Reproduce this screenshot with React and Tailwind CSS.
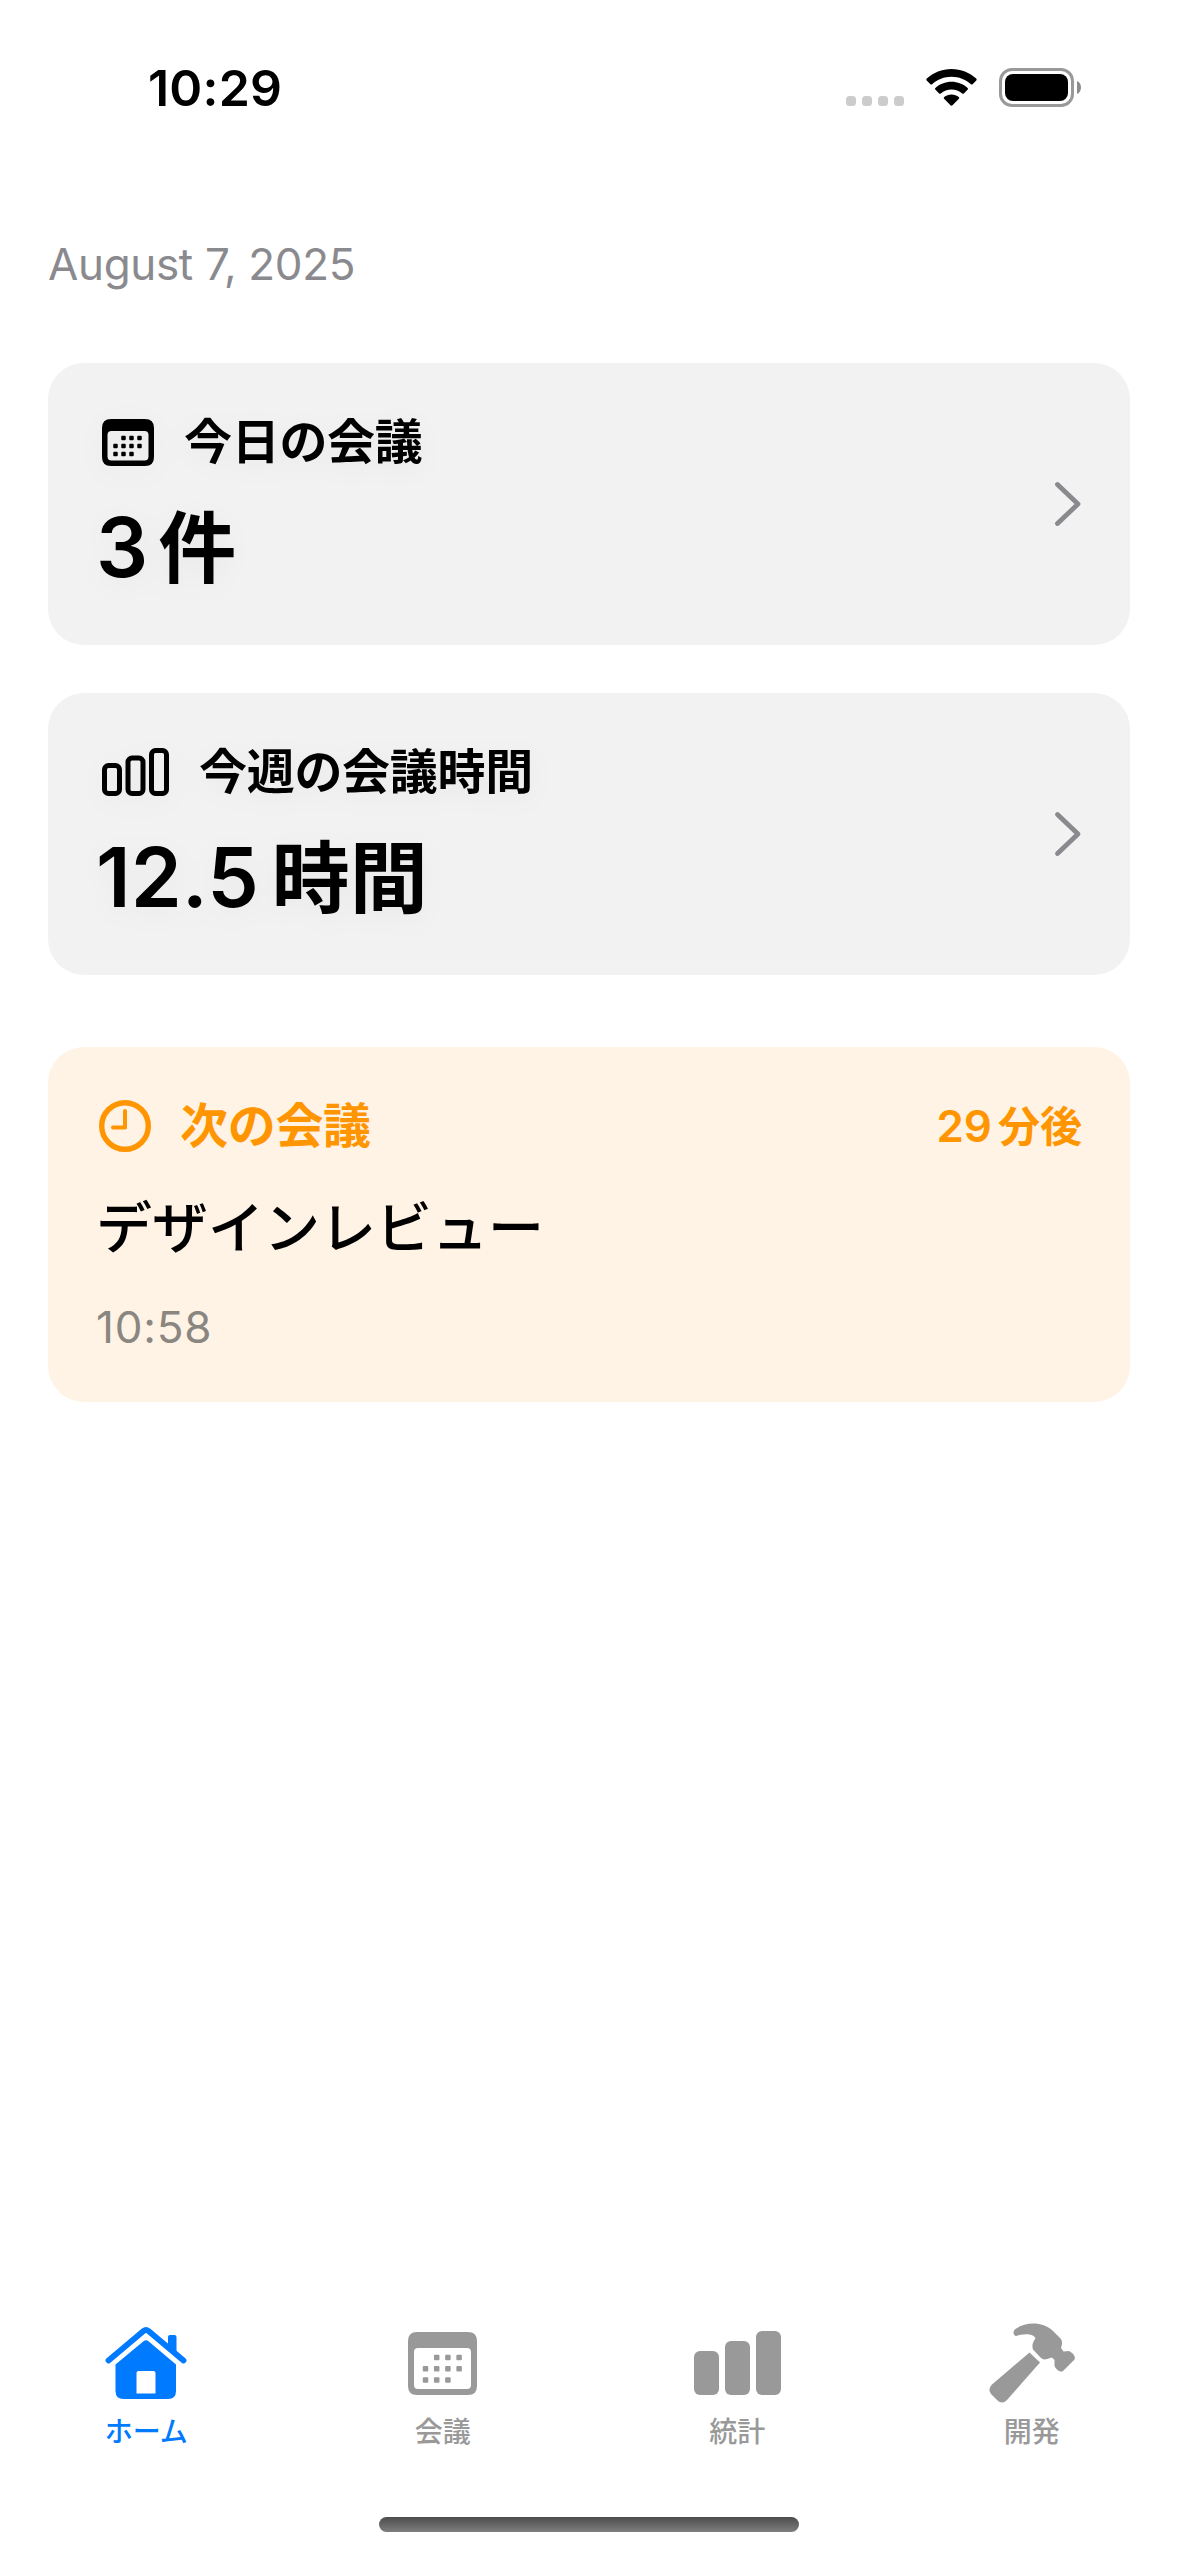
const JP = "font-['Inter','Noto_Sans_CJK_JP',sans-serif]";

function CalendarGlyph({ className, bar, rim, dots, dot, size }) {
  const [w, h] = size;
  return (
    <svg className={className} viewBox={`0 0 ${w} ${h}`} fill="currentColor">
      <path
        fillRule="evenodd"
        d={`M9 0H${w - 9}Q${w} 0 ${w} 9V${h - 9}Q${w} ${h} ${w - 9} ${h}H9Q0 ${h} 0 ${h - 9}V9Q0 0 9 0Z M${rim + 4} ${bar}Q${rim} ${bar} ${rim} ${bar + 4}V${h - rim - 4}Q${rim} ${h - rim} ${rim + 4} ${h - rim}H${w - rim - 4}Q${w - rim} ${h - rim} ${w - rim} ${h - rim - 4}V${bar + 4}Q${w - rim} ${bar} ${w - rim - 4} ${bar}Z`}
      />
      {dots.map(([x, y]) => (
        <rect key={`${x}-${y}`} x={x - dot / 2} y={y - dot / 2} width={dot} height={dot} rx="1" />
      ))}
    </svg>
  );
}

function dotGrid(x, y, step) {
  return [
    [1, 0], [2, 0], [3, 0],
    [0, 1], [1, 1], [2, 1], [3, 1],
    [0, 2], [1, 2], [2, 2],
  ].map(([c, r]) => [x + c * step, y + r * step]);
}

function StatusBar() {
  return (
    <div className="flex h-[176px] justify-between pl-[148px] pr-[96px]">
      <div className="pt-[58px] text-[50px] leading-[60px] font-semibold tracking-[0.2px]">10:29</div>
      <div className="flex items-start pt-[68px]">
        <div className="mt-[28px] flex gap-[6px]">
          {[0, 1, 2, 3].map((i) => (
            <div key={i} className="size-[10px] rounded-[3.5px] bg-[#cccccc]" />
          ))}
        </div>
        <svg className="ml-[22px] h-[38px] w-[51px]" viewBox="0 0 51 38" fill="currentColor">
          <path d="M25.5 1C35 1 43.700 4.500 50.200 10.600C50.800 11.200 50.800 11.900 50.300 12.400L46.600 16.200C46.100 16.700 45.400 16.700 44.900 16.200C39.500 11.400 32.800 8.700 25.500 8.700S11.500 11.400 6.100 16.200C5.600 16.700 4.900 16.700 4.400 16.200L.7 12.400C.2 11.900.2 11.200.8 10.600C7.300 4.500 16 1 25.500 1Z" />
          <path d="M25.500 13.700C31.700 13.700 37.300 16 41.600 19.900C42.200 20.400 42.200 21.100 41.700 21.600L37.900 25.400C37.400 25.900 36.800 25.900 36.200 25.400C33.300 22.900 29.500 21.400 25.500 21.400S17.700 22.900 14.800 25.400C14.200 25.900 13.600 25.900 13.100 25.400L9.300 21.600C8.800 21.100 8.800 20.400 9.400 19.900C13.700 16 19.300 13.700 25.500 13.700Z" />
          <path d="M25.500 26.400C28.300 26.400 30.800 27.400 32.800 29.100C33.400 29.600 33.400 30.300 32.900 30.800L26.500 37.300C25.900 37.900 25.100 37.900 24.500 37.300L18.100 30.800C17.600 30.300 17.600 29.600 18.200 29.100C20.200 27.400 22.700 26.400 25.500 26.400Z" />
        </svg>
        <svg className="ml-[22px] h-[39px] w-[83px]" viewBox="0 0 83 39">
          <rect x="1.500" y="1.500" width="72" height="36" rx="11.500" fill="none" stroke="#999999" strokeWidth="3" />
          <rect x="6" y="6" width="63" height="27" rx="8" fill="#000" />
          <path d="M78 13V26C80.600 24.900 82 22.400 82 19.500S80.600 14.100 78 13Z" fill="#8c8c8c" />
        </svg>
      </div>
    </div>
  );
}

function Chevron() {
  return (
    <svg className="h-[46px] w-[28px]" viewBox="0 0 28 46" fill="none" stroke="#8a8a8e" strokeWidth="4.800" strokeLinecap="round" strokeLinejoin="round">
      <path d="M3.500 3.500L24 23L3.500 42.500" />
    </svg>
  );
}

function SummaryCard({ icon, title, value, unit, unitGap }) {
  return (
    <section className="flex h-[282px] items-center justify-between rounded-[36px] bg-[#f2f2f2] px-[48px]">
      <div className="flex h-full flex-col drop-shadow-[0_6px_12px_rgba(0,0,0,0.04)]">
        <div className="mt-[49px] flex h-[60px] items-center">
          {icon}
          <h2 className="ml-[30px] text-[48px] leading-[60px] font-bold tracking-[-0.3px]">{title}</h2>
        </div>
        <div className="mt-[26px] flex h-[100px] items-baseline leading-[100px] font-semibold">
          <span className="text-[82px]">{value}</span>
          <span className={`${unitGap} text-[78px] font-bold`}>{unit}</span>
        </div>
      </div>
      <Chevron />
    </section>
  );
}

function Tab({ label, active, children }) {
  return (
    <button className={`flex flex-col items-center ${active ? "pr-[2px] text-[#007aff]" : "pl-[2px] text-[#999999]"}`}>
      <span className="flex h-[90px] items-center justify-center">{children}</span>
      <span className="mt-[6px] text-[28px] leading-[36px] font-medium">{label}</span>
    </button>
  );
}

export default function App() {
  return (
    <div className={`flex h-[2556px] w-[1178px] flex-col bg-white text-black ${JP}`}>
      <StatusBar />
      <main className="flex flex-1 flex-col px-[48px]">
        <div className="mt-[58px] h-[60px] text-[44px] leading-[60px] tracking-[-0.35px] text-[#8a8a8e]">August 7, 2025</div>
        <div className="mt-[69px] flex flex-col gap-[48px]">
          <SummaryCard
            icon={
              <CalendarGlyph className="ml-[6px] h-[47px] w-[52px]" size={[52, 47]} bar={12} rim={5.5} dot={4.5} dots={dotGrid(13.5, 19, 8)} />
            }
            title="今日の会議"
            value="3"
            unit="件"
            unitGap="ml-[10px]"
          />
          <SummaryCard
            icon={
              <svg className="ml-[5px] h-[48px] w-[68px]" viewBox="0 0 68 48" fill="none" stroke="currentColor" strokeWidth="5">
                <rect x="3.500" y="17.500" width="15" height="28" rx="4" />
                <rect x="27" y="10" width="15" height="35.500" rx="4" />
                <rect x="50.500" y="2.500" width="15" height="43" rx="4" />
              </svg>
            }
            title="今週の会議時間"
            value="12.5"
            unit="時間"
            unitGap="ml-[13px]"
          />
        </div>
        <section className="mt-[72px] flex h-[355px] flex-col rounded-[36px] bg-[#fff3e5] px-[48px]">
          <div className="mt-[49px] flex h-[60px] items-center text-[#ff9500]">
            <svg className="ml-[2px] h-[52px] w-[53px]" viewBox="0 0 52 52" fill="none" stroke="currentColor" strokeLinecap="round" strokeLinejoin="round">
              <circle cx="26.500" cy="26" r="23.300" strokeWidth="5.400" />
              <path d="M26.500 11V27.500H14.500" strokeWidth="4" />
            </svg>
            <h2 className="ml-[29px] text-[48px] leading-[60px] font-bold tracking-[-0.3px]">次の会議</h2>
            <div className="ml-auto flex items-baseline text-[44px] leading-[60px] font-semibold">
              <span>29</span>
              <span className="ml-[6px] text-[42px] font-bold">分後</span>
            </div>
          </div>
          <div className="mt-[32px] h-[80px] text-[56px] leading-[80px] font-medium">デザインレビュー</div>
          <div className="mt-[29px] h-[60px] text-[44px] leading-[60px] tracking-[0.8px] text-[#8a8680]">10:58</div>
        </section>
      </main>
      <nav className="grid h-[199px] grid-cols-4 items-start">
        <Tab label="ホーム" active>
          <svg className="h-[72px] w-[82px]" viewBox="0 0 82 72" fill="currentColor">
            <path d="M3.500 33.500L38.500 4Q41 2 43.500 4L78.500 33.500" fill="none" stroke="currentColor" strokeWidth="5.800" strokeLinecap="round" strokeLinejoin="round" />
            <path d="M63 20V10Q63 8 65 8H69.500Q71.500 8 71.500 10V28Z" />
            <path fillRule="evenodd" d="M38.500 14.200Q41 12.200 43.500 14.200L71 37.500V64Q71 72 63 72H18.500Q10.500 72 10.500 64V37.500ZM33.500 44Q31.500 44 31.500 46V66.500H50.500V46Q50.500 44 48.500 44Z" />
          </svg>
        </Tab>
        <Tab label="会議">
          <CalendarGlyph className="h-[63px] w-[69px]" size={[69, 63]} bar={16} rim={6} dot={5.5} dots={dotGrid(17.5, 25.5, 11.2)} />
        </Tab>
        <Tab label="統計">
          <svg className="h-[64px] w-[87px]" viewBox="0 0 87 64" fill="currentColor">
            <rect x="0" y="20" width="25" height="44" rx="6" />
            <rect x="31" y="10" width="25" height="54" rx="6" />
            <rect x="62" y="0" width="25" height="64" rx="6" />
          </svg>
        </Tab>
        <Tab label="開発">
          <svg className="h-[80px] w-[86px]" viewBox="0 0 86 80" fill="currentColor">
            <path d="M40.500 29.500L51 39.500L18 77Q13 82 8 77L2.500 71.500Q-2 66.500 3 61.500Z" />
            <path d="M27.500 13C23.500 12.500 24 7.500 26.500 6C38 -2 54 -1 63.500 7.500L71.500 15.500C73.500 18 73.500 21 72 25L74.500 28.500L80 28C84 30 87 33.500 85.500 36.500L74 48C71 50 67 46 65.500 43V37L63 34.500L58 36C55 37 53 36 51 34L44 26.500C42.500 22 44 19 46.500 15.500C45 10 33 10.500 27.500 13Z" />
          </svg>
        </Tab>
      </nav>
      <div className="mx-auto mb-[24px] h-[15px] w-[420px] shrink-0 rounded-full bg-linear-to-b from-[#4c4c4c] to-[#7f7f7f]" />
    </div>
  );
}
